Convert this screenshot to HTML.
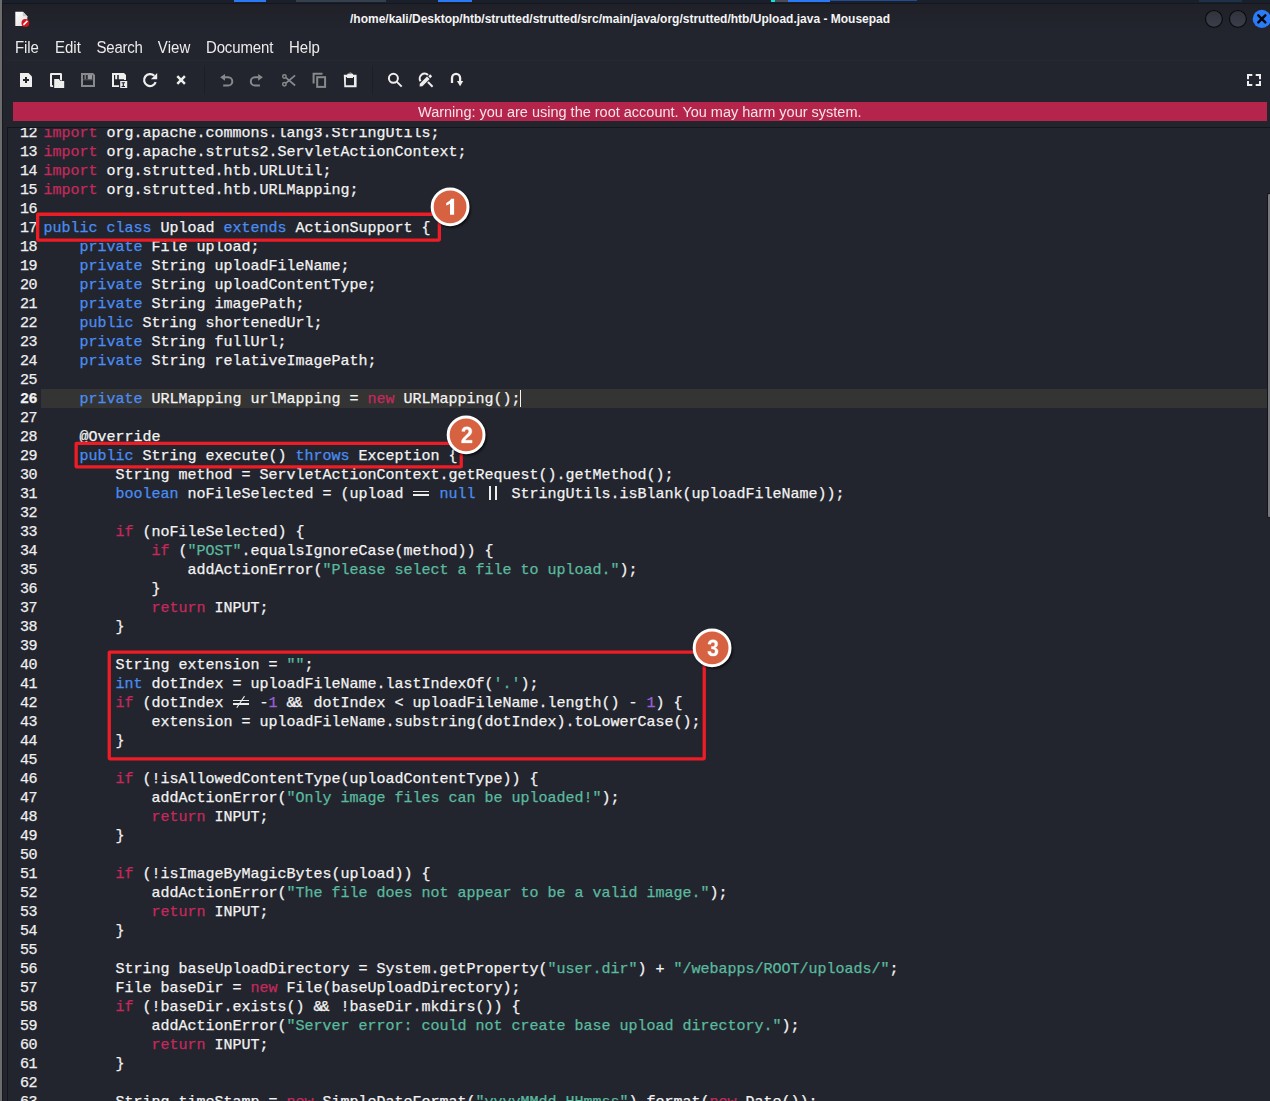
<!DOCTYPE html>
<html><head><meta charset="utf-8"><title>Mousepad</title>
<style>
html,body{margin:0;padding:0}
body{width:1270px;height:1101px;overflow:hidden;background:#23252e;position:relative;font-family:"Liberation Sans",sans-serif;color:#f2f2f2}
.abs{position:absolute}
#desk{left:0;top:0;width:1270px;height:3px;background:#1a1f2c}
#desk i{position:absolute;top:0;height:2px;background:#2a7af5}
#lgray{left:0;top:0;width:2px;height:1101px;background:#6c6c6c}
#ldark{left:2px;top:3px;width:1px;height:1098px;background:#17181d}
#topline{left:3px;top:3px;width:1267px;height:1px;background:#15161b}
#title{left:350px;top:10px;width:539px;height:18px;line-height:18px;font-weight:bold;font-size:12px;white-space:nowrap;color:#f4f4f4}
.menu{top:38px;height:20px;line-height:20px;font-size:15px;color:#ececec;white-space:nowrap;transform:scaleY(1.07);transform-origin:0 15.200px}
#sep1{left:7px;top:60px;width:1263px;height:1px;background:#282a33}
#warn{left:13px;top:102px;width:1254px;height:19px;background:#b5254b}
#warntxt{left:418px;top:103px;transform:scaleY(1.04);transform-origin:0 14px;height:19px;line-height:19px;font-size:14.5px;color:#f3e4e9;white-space:nowrap}
#tvtop{left:7px;top:127px;width:1263px;height:1px;background:#14151a}
#tvleft{left:7px;top:127px;width:1px;height:974px;background:#14151a}
#tv{left:8px;top:128px;width:1262px;height:973px;overflow:hidden}
#code{position:absolute;left:0;top:-5px;width:1262px;font-family:"Liberation Mono",monospace;font-size:15px;line-height:19px;color:#f3f3f3;-webkit-text-stroke:.25px}
#code div{height:19px;white-space:pre;position:relative}
#code b{position:absolute;top:1px;left:0;width:29.200px;text-align:right;font-weight:normal;color:#f0f0f0;letter-spacing:-.4px}
#code span{position:absolute;top:1px;left:35.4px}
#code i{font-style:normal}
#code .cur{background:linear-gradient(#343434,#343434) no-repeat 33px 0/1226px 19px}
#code .cur b{font-weight:bold}
.p{color:#c5295c}.b{color:#4a8df3}.s{color:#5abb9f}.n{color:#9b5fd8}
.lg{display:inline-block;width:18px;height:19px;vertical-align:top;position:relative;letter-spacing:-2px}
.eq:before,.eq:after,.ne:before,.ne:after{content:"";position:absolute;left:.4px;width:16px;height:1.350px;background:#ececec}
.eq:before,.ne:before{top:6.100px}.eq:after,.ne:after{top:9.400px}
.ne i{position:absolute;left:7.75px;top:.85px;width:1.4px;height:14.4px;background:#f3f3f3;transform:rotate(33.7deg)}
.oo:before,.oo:after{content:"";position:absolute;top:.7px;width:1.600px;height:14.100px;background:#ececec}
.oo:before{left:4.800px}.oo:after{left:10.500px}
#caret{left:520px;top:390px;width:1px;height:17px;background:#f3f3f3}
.box{border:3.4px solid #ee1c25;border-radius:1.5px;box-sizing:border-box}
.badge{width:39.4px;height:39.4px;border-radius:50%;box-sizing:border-box;background:#d66242;border:3.2px solid #fff;box-shadow:1.6px 1.8px 1.2px rgba(0,0,0,.55);color:#fff;font-weight:bold;font-size:19.5px;text-align:center;line-height:33px}
#sbar{left:1267px;top:193px;width:3px;height:325px;background:rgba(160,160,166,.68);border:1px solid #15161b;border-right:0;box-sizing:border-box;border-radius:2px 0 0 2px}
</style></head><body>
<div class="abs" id="desk"><i style="left:234px;width:32px"></i><i style="left:438px;width:34px"></i><i style="left:296px;width:90px;background:#34404e"></i><i style="left:1199px;width:43px;background:#1d3248"></i><i style="left:771px;width:5px;background:#12e0d0"></i><i style="left:775px;width:13px;height:1.500px;background:#4a4d58"></i><i style="left:788px;width:42px"></i><i style="left:830px;width:87px;height:1px;opacity:.5"></i></div>
<div class="abs" id="lgray"></div><div class="abs" id="ldark"></div><div class="abs" id="topline"></div>
<div class="abs" style="left:3px;top:4px;width:1267px;height:28px;background:linear-gradient(#1f2028,#23252e)"></div>
<div class="abs" id="title">/home/kali/Desktop/htb/strutted/strutted/src/main/java/org/strutted/htb/Upload.java - Mousepad</div>
<div class="abs menu" style="left:15px;letter-spacing:-.1px">File</div>
<div class="abs menu" style="left:55px">Edit</div>
<div class="abs menu" style="left:96.600px;letter-spacing:-.25px">Search</div>
<div class="abs menu" style="left:157.800px;letter-spacing:.1px">View</div>
<div class="abs menu" style="left:206px;letter-spacing:-.15px">Document</div>
<div class="abs menu" style="left:289px">Help</div>
<div class="abs" id="sep1"></div>
<div class="abs" style="left:204px;top:66px;width:1px;height:28px;background:#1d1f26"></div><div class="abs" style="left:372px;top:66px;width:1px;height:28px;background:#1d1f26"></div>
<!--ICONS-->
<svg class="abs" style="left:0;top:0" width="1270" height="100" viewBox="0 0 1270 100">
<defs><linearGradient id="gb" x1="0" y1="0" x2="0" y2="1"><stop offset="0" stop-color="#30323b"/><stop offset="1" stop-color="#3c3e4b"/></linearGradient>
<linearGradient id="gd" x1="0" y1="0" x2="1" y2="1"><stop offset="0" stop-color="#ffffff"/><stop offset="1" stop-color="#dcdcdc"/></linearGradient></defs>
<!-- app icon -->
<path d="M15.3 11.8h7.6l4.4 4.4v9.8h-12z" fill="url(#gd)"/>
<path d="M22.9 11.8l4.4 4.4h-4.4z" fill="#c9c9c9"/>
<circle cx="25.4" cy="22.9" r="3.9" fill="#d8131b"/>
<path d="M23.4 24.9l4-4" stroke="#fff" stroke-width="1.5"/>
<!-- window buttons -->
<circle cx="1213.9" cy="18.9" r="8.4" fill="url(#gb)" stroke="#08080a" stroke-width="1.1"/>
<circle cx="1237.9" cy="18.9" r="8.4" fill="url(#gb)" stroke="#08080a" stroke-width="1.1"/>
<circle cx="1261.8" cy="18.9" r="9.1" fill="#2a7bf6"/>
<path d="M1258.3 15.4l7 7m0-7l-7 7" stroke="#06070a" stroke-width="2.500" stroke-linecap="round"/>
<g fill="#eeeeec" stroke="none">
<!-- new -->
<path d="M20.6 73h7.9l3.5 3.5v10a.6.6 0 0 1-.6.6h-10.8a.6.6 0 0 1-.6-.6v-12.9a.6.6 0 0 1 .6-.6z"/>
<path d="M25 77h2v2h2v2h-2v2h-2v-2h-2v-2h2z" fill="#23252e"/>
<!-- open -->
<path d="M51.300 73h9.400a1.300 1.300 0 0 1 1.300 1.300v6.700h-2v-6h-8v10.300h1.200v1.700h-1.900a1.300 1.300 0 0 1-1.300-1.300v-11.400a1.300 1.300 0 0 1 1.300-1.300z"/>
<path d="M54.200 79h4.800l1.300 2h3.900v6.900h-10z" stroke="#23252e" stroke-width="1.2" paint-order="stroke"/>
<!-- save-as -->
<path d="M112 73h12l2 2v5h-2v-4.200l-1.600-.8h-8.400v10.300h5v1.700h-7z"/>
<path d="M115.200 75h2v4.300h-2zM118.800 75h5.300v4.300h-5.300z"/>
<path d="M120.200 81h7v7h-7zM121.600 82.300v.9h1.100v2.800h-1.100v.9h3.400v-.9h-1.100v-2.800h1.100v-.9z" fill-rule="evenodd"/>
<!-- paste -->
<path d="M343.800 74.700h3.500v-1h1.300a1.700 1.700 0 0 1 3.200 0h1.300v1h3.500v12.600h-12.300zM345.900 76.900v8.300h8.100v-8.300h-1v1.100h-6.100v-1.100zM349.400 73.400a.6.600 0 1 0 1.200 0a.6.600 0 1 0-1.200 0z" fill-rule="evenodd"/>
</g>
<g fill="none" stroke="#eeeeec" stroke-width="2">
<!-- reload -->
<path d="M155.700 82.200a6 6 0 1 1-1.400-6.400" stroke-width="2.200"/>
<path d="M157.200 73v6.300h-6.300z" fill="#eeeeec" stroke="none"/>
<!-- close x -->
<path d="M177.300 76.200l7.600 7.600m0-7.600l-7.600 7.600" stroke-width="2.500"/>
<!-- search -->
<circle cx="393.400" cy="78.300" r="4.500"/>
<path d="M396.700 81.600l5 5" stroke-width="2"/>
<!-- find replace -->
<path d="M420.500 81.200A4.900 4.900 0 0 1 428 75" stroke-width="2.100"/>
<path d="M427.900 82l4.700 4.700"/>
<path d="M419.600 86.500l.2-2.800 7.200-7.200 2.600 2.600-7.200 7.200z" fill="#eeeeec" stroke="none"/>
<path d="M430.200 74.300l1.950 1.950-1.950 1.950-1.950-1.950z" fill="#eeeeec" stroke="none"/>
<!-- goto -->
<path d="M452 83.100v-5.100a4.050 4.050 0 0 1 8.100 0v3.500" stroke-width="2.300"/>
<path d="M456.900 80.900h6.300l-3.100 5.400z" fill="#eeeeec" stroke="none"/>
<!-- fullscreen -->
<path d="M1248 79.200v-4.200h4.300M1255.700 75h4.300v4.200M1260 80.900v4.200h-4.300M1252.300 85.100h-4.300v-4.200"/>
</g>
<g fill="none" stroke="#88898c" stroke-width="2">
<!-- save (disabled) -->
<path d="M82 74h10.600l1.400 1.400v10.600h-12z"/>
<path d="M84.400 75h1.700v4.400h-1.700z" fill="#77787b" stroke="none"/><path d="M87.700 75h4.500v4.400h-4.500z" fill="#97989a" stroke="none"/><path d="M83 79.800h10" stroke-width=".8" stroke="#5e5f63"/>
<!-- undo -->
<path d="M224.500 77.300h3.700a4.100 4.100 0 0 1 0 8.200h-5"/>
<path d="M220.200 77.300l4.800-3.400v6.800z" fill="#88898c" stroke="none"/>
<!-- redo -->
<path d="M258.600 77.300h-3.700a4.100 4.100 0 0 0 0 8.200h5"/>
<path d="M262.900 77.300l-4.800-3.400v6.800z" fill="#88898c" stroke="none"/>
<!-- cut -->
<circle cx="284.400" cy="76.500" r="1.700" stroke-width="1.500"/>
<circle cx="284.400" cy="84.300" r="1.700" stroke-width="1.500"/>
<path d="M285.900 77.600l9.200 7.900M285.900 83.200l9.200-7.900" stroke-width="1.700"/>
<!-- copy -->
<path d="M322.500 73.800h-8.900v9.700"/>
<rect x="317.200" y="77.200" width="7.900" height="9.700"/>
</g>
</svg>
<!--/ICONS-->
<div class="abs" id="warn"></div>
<div class="abs" id="warntxt">Warning: you are using the root account. You may harm your system.</div>
<div class="abs" id="tvtop"></div><div class="abs" id="tvleft"></div>
<div class="abs" id="tv"><div id="code">
<div><b>12</b><span><i class="p">import</i> org.apache.commons.lang3.StringUtils;</span></div>
<div><b>13</b><span><i class="p">import</i> org.apache.struts2.ServletActionContext;</span></div>
<div><b>14</b><span><i class="p">import</i> org.strutted.htb.URLUtil;</span></div>
<div><b>15</b><span><i class="p">import</i> org.strutted.htb.URLMapping;</span></div>
<div><b>16</b><span></span></div>
<div><b>17</b><span><i class="b">public</i> <i class="b">class</i> Upload <i class="b">extends</i> ActionSupport {</span></div>
<div><b>18</b><span>    <i class="b">private</i> File upload;</span></div>
<div><b>19</b><span>    <i class="b">private</i> String uploadFileName;</span></div>
<div><b>20</b><span>    <i class="b">private</i> String uploadContentType;</span></div>
<div><b>21</b><span>    <i class="b">private</i> String imagePath;</span></div>
<div><b>22</b><span>    <i class="b">public</i> String shortenedUrl;</span></div>
<div><b>23</b><span>    <i class="b">private</i> String fullUrl;</span></div>
<div><b>24</b><span>    <i class="b">private</i> String relativeImagePath;</span></div>
<div><b>25</b><span></span></div>
<div class="cur"><b>26</b><span>    <i class="b">private</i> URLMapping urlMapping = <i class="p">new</i> URLMapping();</span></div>
<div><b>27</b><span></span></div>
<div><b>28</b><span>    @Override</span></div>
<div><b>29</b><span>    <i class="b">public</i> String execute() <i class="b">throws</i> Exception {</span></div>
<div><b>30</b><span>        String method = ServletActionContext.getRequest().getMethod();</span></div>
<div><b>31</b><span>        <i class="b">boolean</i> noFileSelected = (upload <i class="lg eq"></i> <i class="b">null</i> <i class="lg oo"></i> StringUtils.isBlank(uploadFileName));</span></div>
<div><b>32</b><span></span></div>
<div><b>33</b><span>        <i class="p">if</i> (noFileSelected) {</span></div>
<div><b>34</b><span>            <i class="p">if</i> (<i class="s">"POST"</i>.equalsIgnoreCase(method)) {</span></div>
<div><b>35</b><span>                addActionError(<i class="s">"Please select a file to upload."</i>);</span></div>
<div><b>36</b><span>            }</span></div>
<div><b>37</b><span>            <i class="p">return</i> INPUT;</span></div>
<div><b>38</b><span>        }</span></div>
<div><b>39</b><span></span></div>
<div><b>40</b><span>        String extension = <i class="s">""</i>;</span></div>
<div><b>41</b><span>        <i class="b">int</i> dotIndex = uploadFileName.lastIndexOf(<i class="s">'.'</i>);</span></div>
<div><b>42</b><span>        <i class="p">if</i> (dotIndex <i class="lg ne"><i></i></i> -<i class="n">1</i> <i class="lg">&amp;&amp;</i> dotIndex &lt; uploadFileName.length() - <i class="n">1</i>) {</span></div>
<div><b>43</b><span>            extension = uploadFileName.substring(dotIndex).toLowerCase();</span></div>
<div><b>44</b><span>        }</span></div>
<div><b>45</b><span></span></div>
<div><b>46</b><span>        <i class="p">if</i> (!isAllowedContentType(uploadContentType)) {</span></div>
<div><b>47</b><span>            addActionError(<i class="s">"Only image files can be uploaded!"</i>);</span></div>
<div><b>48</b><span>            <i class="p">return</i> INPUT;</span></div>
<div><b>49</b><span>        }</span></div>
<div><b>50</b><span></span></div>
<div><b>51</b><span>        <i class="p">if</i> (!isImageByMagicBytes(upload)) {</span></div>
<div><b>52</b><span>            addActionError(<i class="s">"The file does not appear to be a valid image."</i>);</span></div>
<div><b>53</b><span>            <i class="p">return</i> INPUT;</span></div>
<div><b>54</b><span>        }</span></div>
<div><b>55</b><span></span></div>
<div><b>56</b><span>        String baseUploadDirectory = System.getProperty(<i class="s">"user.dir"</i>) + <i class="s">"/webapps/ROOT/uploads/"</i>;</span></div>
<div><b>57</b><span>        File baseDir = <i class="p">new</i> File(baseUploadDirectory);</span></div>
<div><b>58</b><span>        <i class="p">if</i> (!baseDir.exists() <i class="lg">&amp;&amp;</i> !baseDir.mkdirs()) {</span></div>
<div><b>59</b><span>            addActionError(<i class="s">"Server error: could not create base upload directory."</i>);</span></div>
<div><b>60</b><span>            <i class="p">return</i> INPUT;</span></div>
<div><b>61</b><span>        }</span></div>
<div><b>62</b><span></span></div>
<div><b>63</b><span>        String timeStamp = <i class="p">new</i> SimpleDateFormat(<i class="s">"yyyyMMdd_HHmmss"</i>).format(<i class="p">new</i> Date());</span></div>
</div></div>
<div class="abs" id="caret"></div>
<div class="abs" id="sbar"></div>
<svg class="abs" style="left:0;top:0" width="1270" height="1101" viewBox="0 0 1270 1101">
<defs><filter id="sh" x="-20%" y="-20%" width="140%" height="140%"><feGaussianBlur stdDeviation=".8"/></filter></defs>
<g fill="none" stroke="#ee1c25" stroke-width="3.3">
<rect x="37.650" y="214.250" width="401.700" height="25.800" rx=".5"/>
<rect x="76.150" y="443.350" width="385.100" height="23.600" rx=".5"/>
<rect x="109.250" y="652.050" width="595" height="106.800" rx=".5"/>
</g>
<circle cx="451.6" cy="208.7" r="19.3" fill="#000" opacity=".62" filter="url(#sh)"/><circle cx="450.1" cy="206.9" r="17.9" fill="#d66242" stroke="#fff" stroke-width="3"/><path d="M454.1 198.8H451.3Q449.6 201.5 446.2 202.9V205.5Q448.4 204.9 450 203.6V214.8H454.1Z" fill="#fff"/>
<circle cx="467.6" cy="436.7" r="19.3" fill="#000" opacity=".62" filter="url(#sh)"/><circle cx="466.1" cy="434.9" r="17.9" fill="#d66242" stroke="#fff" stroke-width="3"/><path d="M461.6 442.9V440.69Q462.19 439.32 463.27 438.02Q464.35 436.71 465.99 435.3Q467.56 433.94 468.2 433.06Q468.83 432.17 468.83 431.32Q468.83 429.24 466.86 429.24Q465.9 429.24 465.4 429.79Q464.89 430.34 464.74 431.44L461.73 431.25Q461.98 429.03 463.29 427.87Q464.59 426.7 466.84 426.7Q469.27 426.7 470.57 427.88Q471.87 429.06 471.87 431.19Q471.87 432.31 471.45 433.21Q471.04 434.12 470.39 434.88Q469.74 435.65 468.94 436.32Q468.15 436.99 467.4 437.62Q466.66 438.26 466.05 438.9Q465.43 439.55 465.14 440.28H472.1V442.9Z" fill="#fff" stroke="#fff" stroke-width=".35"/>
<circle cx="713.6" cy="649.7" r="19.3" fill="#000" opacity=".62" filter="url(#sh)"/><circle cx="712.1" cy="647.9" r="17.9" fill="#d66242" stroke="#fff" stroke-width="3"/><path d="M718.1 651.43Q718.1 653.66 716.77 654.88Q715.44 656.1 712.99 656.1Q710.67 656.1 709.3 654.92Q707.93 653.74 707.7 651.52L710.62 651.24Q710.9 653.53 712.98 653.53Q714.01 653.53 714.59 652.96Q715.16 652.4 715.16 651.24Q715.16 650.17 714.46 649.61Q713.77 649.05 712.4 649.05H711.4V646.48H712.34Q713.57 646.48 714.2 645.92Q714.82 645.37 714.82 644.33Q714.82 643.35 714.33 642.79Q713.83 642.23 712.88 642.23Q711.99 642.23 711.44 642.77Q710.9 643.31 710.82 644.31L707.95 644.08Q708.17 642.03 709.49 640.86Q710.81 639.7 712.93 639.7Q715.19 639.7 716.46 640.82Q717.73 641.95 717.73 643.93Q717.73 645.42 716.94 646.38Q716.15 647.34 714.66 647.66V647.7Q716.31 647.92 717.21 648.9Q718.1 649.89 718.1 651.43Z" fill="#fff" stroke="#fff" stroke-width=".35"/>
</svg>
</body></html>
